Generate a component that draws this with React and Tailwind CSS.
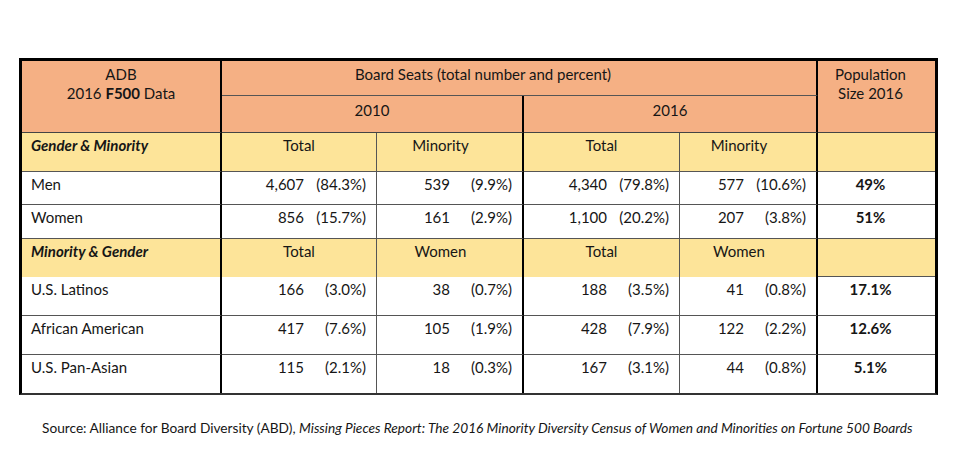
import React from 'react';

const ORANGE = 'bg-[#f5b084]';
const YELLOW = 'bg-[#fde499]';

const groupA = [
  { label: 'Men', t10: ['4,607', '(84.3%)'], m10: ['539', '(9.9%)'], t16: ['4,340', '(79.8%)'], m16: ['577', '(10.6%)'], pop: '49%' },
  { label: 'Women', t10: ['856', '(15.7%)'], m10: ['161', '(2.9%)'], t16: ['1,100', '(20.2%)'], m16: ['207', '(3.8%)'], pop: '51%' },
];

const groupB = [
  { label: 'U.S. Latinos', t10: ['166', '(3.0%)'], m10: ['38', '(0.7%)'], t16: ['188', '(3.5%)'], m16: ['41', '(0.8%)'], pop: '17.1%' },
  { label: 'African American', t10: ['417', '(7.6%)'], m10: ['105', '(1.9%)'], t16: ['428', '(7.9%)'], m16: ['122', '(2.2%)'], pop: '12.6%' },
  { label: 'U.S. Pan-Asian', t10: ['115', '(2.1%)'], m10: ['18', '(0.3%)'], t16: ['167', '(3.1%)'], m16: ['44', '(0.8%)'], pop: '5.1%' },
];

// number + percent, right aligned like the Word tab stops
const Num = ({ v, thick, last }) => (
  <div
    className={`flex justify-end pr-[10px] pt-[3px] ${thick ? 'border-r-2 border-r-black' : 'border-r border-r-[#555]'} ${last ? '' : 'border-b border-b-[#555]'}`}
  >
    <span className="text-right">{v[0]}</span>
    <span className="w-[62px] text-right">{v[1]}</span>
  </div>
);

const DataRow = ({ r, last }) => (
  <>
    <div className={`pl-[9px] pt-[3px] border-r-2 border-r-black ${last ? '' : 'border-b border-b-[#555]'}`}>{r.label}</div>
    <Num v={r.t10} last={last} />
    <Num v={r.m10} thick last={last} />
    <Num v={r.t16} last={last} />
    <Num v={r.m16} thick last={last} />
    <div className={`pt-[3px] pr-[12px] text-center font-bold ${last ? '' : 'border-b border-b-[#555]'}`}>{r.pop}</div>
  </>
);

const SubHead = ({ title, a, b, noBottom }) => {
  const bb = noBottom ? '' : 'border-b border-b-[#555]';
  return (
    <>
      <div className={`${YELLOW} pl-[9px] pt-[3px] font-bold italic border-r-2 border-r-black ${bb}`}>{title}</div>
      <div className={`${YELLOW} pt-[3px] text-center border-r border-r-[#555] ${bb}`}>{a}</div>
      <div className={`${YELLOW} pt-[3px] pr-[18px] text-center border-r-2 border-r-black ${bb}`}>{b}</div>
      <div className={`${YELLOW} pt-[3px] text-center border-r border-r-[#555] ${bb}`}>{a}</div>
      <div className={`${YELLOW} pt-[3px] pr-[18px] text-center border-r-2 border-r-black ${bb}`}>{b}</div>
      <div className={`${YELLOW} border-b border-b-[#555]`}></div>
    </>
  );
};

export default function App() {
  return (
    <div className="w-[980px] h-[472px] bg-white pt-[58px] pl-[19px] text-[#161616] text-[15px] leading-[19px] font-['Lato',sans-serif]">
      <div className="w-[919px] border-[3px] border-black border-b-2 border-b-[#333]">
        <div className="grid grid-cols-[200px_155px_147px_156px_138px_117px] grid-rows-[35px_37px_39px_33px_34px_38px_39px_39px_38px]">
          {/* orange header */}
          <div className={`${ORANGE} row-span-2 text-center pt-[4px] border-r-2 border-r-black border-b border-b-[#444]`}>
            <div>ADB</div>
            <div>
              2016 <b>F500</b> Data
            </div>
          </div>
          <div className={`${ORANGE} col-span-4 text-center pt-[4px] pr-[72px] border-r-2 border-r-black border-b border-b-[#555]`}>
            Board Seats (total number and percent)
          </div>
          <div className={`${ORANGE} row-span-2 text-center pt-[4px] pr-[12px] border-b border-b-[#444]`}>
            <div>Population</div>
            <div>Size 2016</div>
          </div>
          <div className={`${ORANGE} col-start-2 col-span-2 text-center pt-[5px] border-r-2 border-r-black border-b border-b-[#444]`}>2010</div>
          <div className={`${ORANGE} col-span-2 text-center pt-[5px] border-r-2 border-r-black border-b border-b-[#444]`}>2016</div>

          <SubHead title="Gender & Minority" a="Total" b="Minority" />
          {groupA.map(r => (
            <DataRow key={r.label} r={r} />
          ))}

          <SubHead title="Minority & Gender" a="Total" b="Women" noBottom />
          {groupB.map((r, i) => (
            <DataRow key={r.label} r={r} last={i === groupB.length - 1} />
          ))}
        </div>
      </div>

      <p className="mt-[23px] ml-[23px] text-[13.7px]">
        Source: Alliance for Board Diversity (ABD),{' '}
        <i>
          Missing Pieces Report: The 2016 Minority Diversity Census of Women and Minorities on Fortune 500 Boards
        </i>
      </p>
    </div>
  );
}
